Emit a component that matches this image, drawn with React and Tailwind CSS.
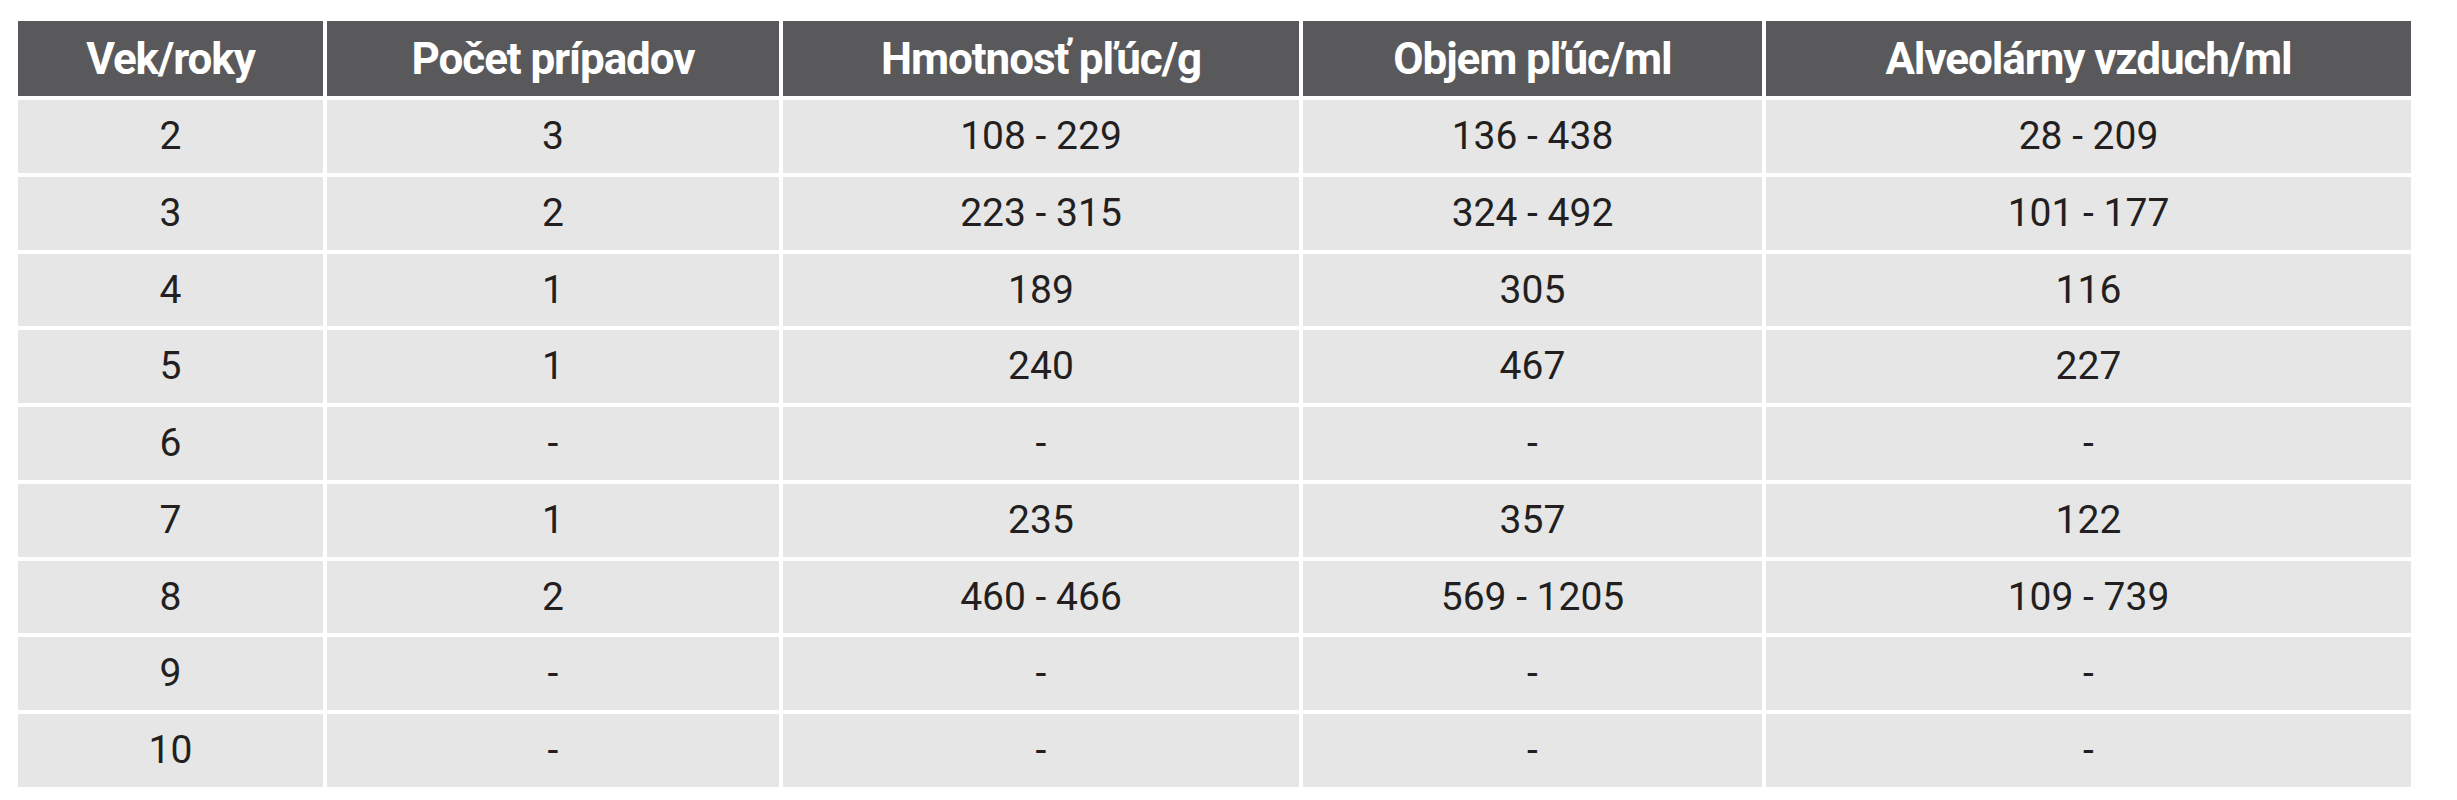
import React from 'react';

const head = ['Vek/roky', 'Počet prípadov', 'Hmotnosť pľúc/g', 'Objem pľúc/ml', 'Alveolárny vzduch/ml'];

const rows = [
  ['2', '3', '108 - 229', '136 - 438', '28 - 209'],
  ['3', '2', '223 - 315', '324 - 492', '101 - 177'],
  ['4', '1', '189', '305', '116'],
  ['5', '1', '240', '467', '227'],
  ['6', '-', '-', '-', '-'],
  ['7', '1', '235', '357', '122'],
  ['8', '2', '460 - 466', '569 - 1205', '109 - 739'],
  ['9', '-', '-', '-', '-'],
  ['10', '-', '-', '-', '-'],
];

export default function App() {
  return (
    <div className="min-h-[800px] w-[2457px] bg-white pt-[21px] pl-[18px]">
      <div className="grid grid-cols-[305px_452px_516px_459px_645px] gap-[4px]">
        {head.map((h) => (
          <div
            key={h}
            className="h-[75px] flex items-center justify-center bg-[#59595b] text-white font-bold text-[44px] tracking-tight font-['Liberation_Sans_Narrow','Roboto',sans-serif]"
          >
            {h}
          </div>
        ))}
        {rows.map((r, i) =>
          r.map((c, j) => (
            <div
              key={i + '-' + j}
              className="h-[72.75px] flex items-center justify-center bg-[#e6e6e6] text-[#231f20] text-[39px] font-['Roboto',sans-serif]"
            >
              {c}
            </div>
          ))
        )}
      </div>
    </div>
  );
}
